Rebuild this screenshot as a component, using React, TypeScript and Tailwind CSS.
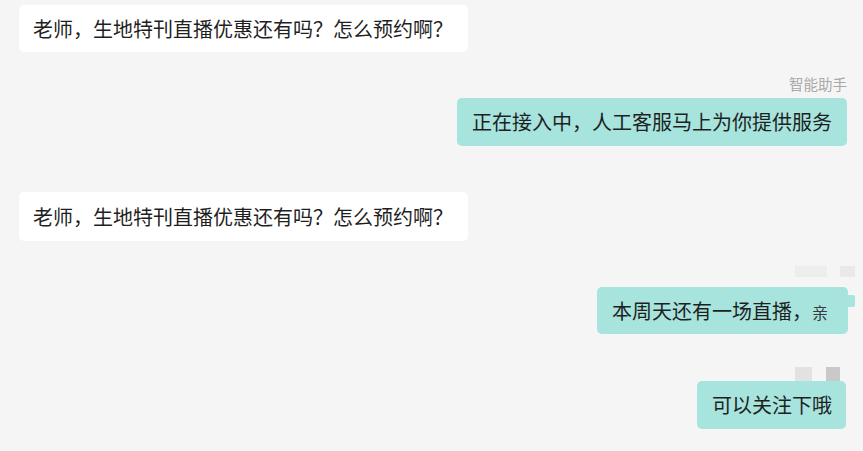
export default function App() {
  const font = { fontFamily: '"Noto Sans CJK SC", "Noto Sans", sans-serif' };

  return (
    <div
      className="w-[863px] h-[451px] overflow-hidden bg-[#f5f5f5] text-[#1f1f1f] flex flex-col"
      style={font}
    >
      {/* incoming */}
      <div className="mt-[5px] ml-[19px] self-start">
        <div className="h-[47px] w-[449px] px-[14px] flex items-center bg-white rounded-[5px] text-[20px] leading-none whitespace-nowrap">
          老师，生地特刊直播优惠还有吗？怎么预约啊？
        </div>
      </div>

      {/* assistant label + reply */}
      <div className="mt-[23px] mr-[16px] self-end flex flex-col items-end">
        <span className="text-[14.5px] leading-[18px] text-[#a9a9a9]">智能助手</span>
        <div className="mt-[5px] h-[48px] w-[390px] px-[15px] flex items-center bg-[#a6e4dd] rounded-[5px] text-[20px] leading-none whitespace-nowrap">
          正在接入中，人工客服马上为你提供服务
        </div>
      </div>

      {/* incoming again */}
      <div className="mt-[46px] ml-[19px] self-start">
        <div className="h-[49px] w-[449px] px-[14px] flex items-center bg-white rounded-[5px] text-[20px] leading-none whitespace-nowrap">
          老师，生地特刊直播优惠还有吗？怎么预约啊？
        </div>
      </div>

      {/* blurred avatar bits */}
      <div className="mt-[25px] mr-[8px] self-end flex gap-[13px]">
        <div className="w-[32px] h-[11px] bg-[#ededed]" />
        <div className="w-[15px] h-[11px] bg-[#e9e9e9]" />
      </div>

      {/* outgoing 1 */}
      <div className="mt-[10px] mr-[8px] self-end flex items-start">
        <div className="h-[47px] w-[251px] pl-[15px] flex items-center bg-[#a6e4dd] rounded-[5px] text-[20px] leading-none whitespace-nowrap">
          本周天还有一场直播，
          <span className="mt-[3px] text-[16px] leading-none text-[#3a3a3a]">亲</span>
        </div>
        <div className="mt-[8px] w-[7px] h-[12px] bg-[#a6e4dd] rounded-r-[2px]" />
      </div>

      {/* blurred avatar bits */}
      <div className="mt-[33px] mr-[23px] self-end flex gap-[14px]">
        <div className="w-[17px] h-[14px] bg-[#e2e2e2]" />
        <div className="w-[14px] h-[15px] bg-[#c9c9c9]" />
      </div>

      {/* outgoing 2 */}
      <div className="-mt-[1px] mr-[17px] self-end">
        <div className="h-[48px] w-[149px] px-[15px] flex items-center bg-[#a6e4dd] rounded-[5px] text-[20px] leading-none whitespace-nowrap">
          可以关注下哦
        </div>
      </div>
    </div>
  );
}
